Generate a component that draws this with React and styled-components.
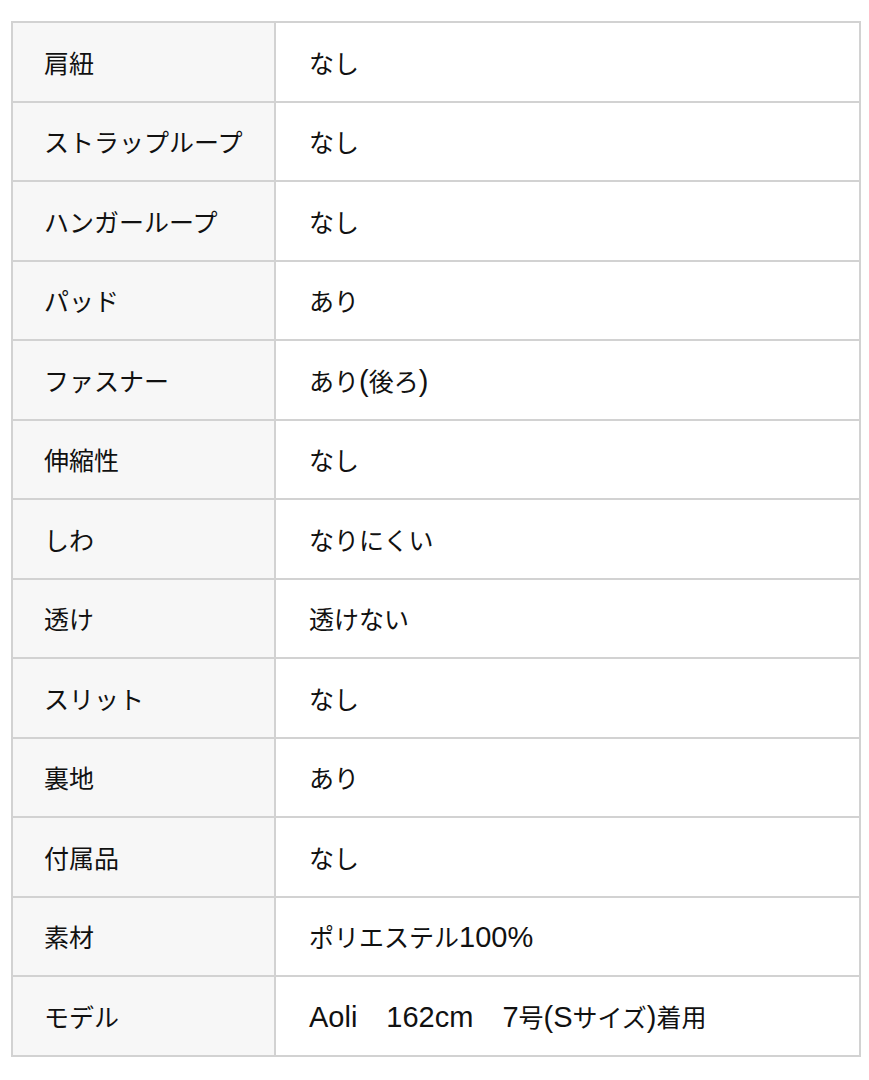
import React from 'react';
import styled, { createGlobalStyle } from 'styled-components';

const GlobalStyle = createGlobalStyle`
  body {
    margin: 0;
    background: #ffffff;
    font-family: "Noto Sans CJK JP", "Liberation Sans", sans-serif;
    color: #111111;
  }
`;

const Page = styled.div`
  padding: 21px 8px 24px 11px;
`;

const SpecTable = styled.table`
  width: 850px;
  border-collapse: collapse;
  border: 2px solid #d2d2d2;
`;

const Row = styled.tr`
  height: 79.5px;
`;

const Label = styled.th`
  width: 230px;
  padding: 0 0 0 31px;
  background: #f7f7f7;
  border: 2px solid #d2d2d2;
  text-align: left;
  font-weight: normal;
  font-size: 25px;
  vertical-align: middle;
`;

const Value = styled.td`
  padding: 0 0 0 33px;
  border: 2px solid #d2d2d2;
  font-size: 25px;
  vertical-align: middle;
`;

// latin runs are set larger, like the Helvetica-based latin of Hiragino
const Latin = styled.span`
  font-family: "Liberation Sans", "Noto Sans CJK JP", sans-serif;
  font-size: 29px;
  line-height: 1;
`;

const specs = [
  ['肩紐', 'なし'],
  ['ストラップループ', 'なし'],
  ['ハンガーループ', 'なし'],
  ['パッド', 'あり'],
  ['ファスナー', 'あり(後ろ)'],
  ['伸縮性', 'なし'],
  ['しわ', 'なりにくい'],
  ['透け', '透けない'],
  ['スリット', 'なし'],
  ['裏地', 'あり'],
  ['付属品', 'なし'],
  ['素材', 'ポリエステル100%'],
  ['モデル', 'Aoli　162cm　7号(Sサイズ)着用'],
];

function renderText(text) {
  return text.split(/([\x20-\x7E\u3000]+)/).map((part, i) =>
    i % 2 === 1 ? <Latin key={i}>{part}</Latin> : part
  );
}

export default function App() {
  return (
    <>
      <GlobalStyle />
      <Page>
        <SpecTable>
          <tbody>
            {specs.map(([label, value]) => (
              <Row key={label}>
                <Label>{renderText(label)}</Label>
                <Value>{renderText(value)}</Value>
              </Row>
            ))}
          </tbody>
        </SpecTable>
      </Page>
    </>
  );
}
